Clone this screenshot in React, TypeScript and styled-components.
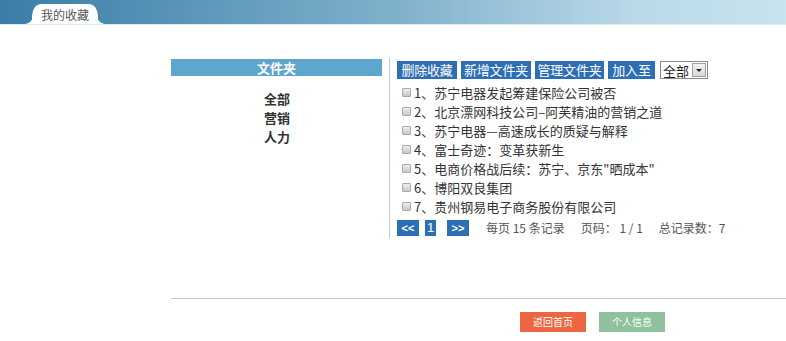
import styled, { createGlobalStyle } from "styled-components";

const GlobalStyle = createGlobalStyle`
  body {
    margin: 0;
    background: #fff;
    font-family: "Noto Sans CJK SC", "Liberation Sans", sans-serif;
    color: #333;
  }
`;

const Header = styled.div`
  height: 25px;
  background: linear-gradient(to right, #3a7da7 0%, #7fb0cb 50%, #b9d8e8 80%, #c9e3ef 100%);
  border-bottom: 1px solid #d6eaf2;
  display: flex;
  align-items: flex-end;
  padding-left: 26px;
  box-sizing: border-box;
`;

const Tab = styled.div`
  position: relative;
  width: 66px;
  height: 20px;
  margin-left: 6px;
  background: #fff;
  border-radius: 9px 9px 0 0 / 12px 12px 0 0;
  display: flex;
  align-items: center;
  justify-content: center;
  font-size: 12px;
  color: #555;
  line-height: 1;
  padding-top: 1px;
  box-sizing: border-box;
  &::before,
  &::after {
    content: "";
    position: absolute;
    bottom: 0;
    width: 8px;
    height: 8px;
    background: radial-gradient(circle at var(--cx) 0, transparent 7.5px, #fff 8px);
  }
  &::before {
    left: -7px;
    --cx: 0;
  }
  &::after {
    right: -7px;
    --cx: 100%;
  }
`;

const Main = styled.div`
  display: flex;
  margin: 33px 0 0 171px;
  height: 180px;
`;

const Sidebar = styled.div`
  width: 211px;
`;

const SideTitle = styled.div`
  height: 17px;
  background: #5ea6cd;
  color: #fff;
  font-size: 13px;
  font-weight: bold;
  text-align: center;
  line-height: 17px;
  margin-top: 1px;
`;

const FolderList = styled.ul`
  list-style: none;
  margin: 0;
  padding: 13px 0 0 93px;
`;

const Folder = styled.li`
  font-size: 13px;
  font-weight: bold;
  line-height: 19px;
  color: #333;
`;

const Content = styled.div`
  margin-left: 7px;
  border-left: 1px solid #c8c8c8;
  padding-left: 7px;
  flex: 1;
`;

const Toolbar = styled.div`
  display: flex;
  align-items: center;
  gap: 4px;
  margin-top: 3px;
`;

const ToolButton = styled.button<{ $w: number }>`
  width: ${(p) => p.$w}px;
  height: 18px;
  padding: 0;
  border: none;
  background: #2d6fb4;
  color: #fff;
  font-family: inherit;
  font-size: 13px;
  line-height: 18px;
  letter-spacing: -0.2px;
  white-space: nowrap;
  cursor: pointer;
`;

const Select = styled.div`
  display: flex;
  align-items: center;
  justify-content: space-between;
  width: 48px;
  height: 18px;
  margin-left: 1px;
  border: 1px solid #8a8a8a;
  box-sizing: border-box;
  background: #fff;
  font-size: 13px;
  padding: 0 1px 0 2px;
  color: #222;
`;

const SelectArrow = styled.span`
  width: 14px;
  height: 14px;
  background: linear-gradient(#f2f2f2, #d8d8d8);
  border: 1px solid #a0a0a0;
  box-sizing: border-box;
  display: flex;
  align-items: center;
  justify-content: center;
  &::after {
    content: "";
    border-left: 3px solid transparent;
    border-right: 3px solid transparent;
    border-top: 3px solid #222;
  }
`;

const Items = styled.ul`
  list-style: none;
  margin: 4px 0 0 5px;
  padding: 0;
`;

const Item = styled.li`
  display: flex;
  align-items: center;
  font-size: 13px;
  line-height: 19px;
  color: #333;
`;

const Check = styled.span`
  width: 7px;
  height: 7px;
  margin-right: 3px;
  border: 1px solid #aaa;
  background: linear-gradient(#eee, #c8c8c8);
  border-radius: 1px;
`;

const Pager = styled.div`
  display: flex;
  align-items: center;
  margin-top: 3px;
  font-size: 12px;
  color: #555;
`;

const PageButton = styled.span<{ $wide?: boolean }>`
  display: inline-flex;
  align-items: center;
  justify-content: center;
  height: 16px;
  width: ${(p) => (p.$wide ? "22px" : "11px")};
  margin-right: ${(p) => (p.$wide ? "6px" : "11px")};
  background: #2d6fb4;
  color: #fff;
  font-family: "Liberation Sans", sans-serif;
  font-size: ${(p) => (p.$wide ? "11px" : "13px")};
  font-weight: ${(p) => (p.$wide ? "bold" : "normal")};
`;

const PageInfo = styled.span<{ $gap: number }>`
  margin-left: ${(p) => p.$gap}px;
  white-space: pre;
`;

const Footer = styled.div`
  margin: 60px 0 0 171px;
  border-top: 1px solid #c8c8c8;
  display: flex;
  gap: 13px;
  padding: 13px 0 0 349px;
`;

const FootButton = styled.button<{ $color: string }>`
  width: 66px;
  height: 20px;
  border: none;
  background: ${(p) => p.$color};
  color: #fff;
  font-family: inherit;
  font-size: 10px;
  line-height: 20px;
  padding: 0;
`;

const folders = ["全部", "营销", "人力"];

const tools = [
  { label: "删除收藏", w: 60 },
  { label: "新增文件夹", w: 70 },
  { label: "管理文件夹", w: 69 },
  { label: "加入至", w: 47 },
];

const records = [
  "苏宁电器发起筹建保险公司被否",
  "北京漂网科技公司–阿芙精油的营销之道",
  "苏宁电器—高速成长的质疑与解释",
  "富士奇迹：变革获新生",
  "电商价格战后续：苏宁、京东\"晒成本\"",
  "博阳双良集团",
  "贵州钢易电子商务股份有限公司",
];

const App = () => (
  <>
    <GlobalStyle />
    <Header>
      <Tab>我的收藏</Tab>
    </Header>
    <Main>
      <Sidebar>
        <SideTitle>文件夹</SideTitle>
        <FolderList>
          {folders.map((f) => (
            <Folder key={f}>{f}</Folder>
          ))}
        </FolderList>
      </Sidebar>
      <Content>
        <Toolbar>
          {tools.map((t) => (
            <ToolButton key={t.label} $w={t.w}>
              {t.label}
            </ToolButton>
          ))}
          <Select>
            全部
            <SelectArrow />
          </Select>
        </Toolbar>
        <Items>
          {records.map((r, i) => (
            <Item key={r}>
              <Check />
              {i + 1}、{r}
            </Item>
          ))}
        </Items>
        <Pager>
          <PageButton $wide>&lt;&lt;</PageButton>
          <PageButton>1</PageButton>
          <PageButton $wide>&gt;&gt;</PageButton>
          <PageInfo $gap={11}>每页 15 条记录</PageInfo>
          <PageInfo $gap={16}>页码： 1 / 1</PageInfo>
          <PageInfo $gap={16}>总记录数：7</PageInfo>
        </Pager>
      </Content>
    </Main>
    <Footer>
      <FootButton $color="#ec6641">返回首页</FootButton>
      <FootButton $color="#8fc19e">个人信息</FootButton>
    </Footer>
  </>
);

export default App;
